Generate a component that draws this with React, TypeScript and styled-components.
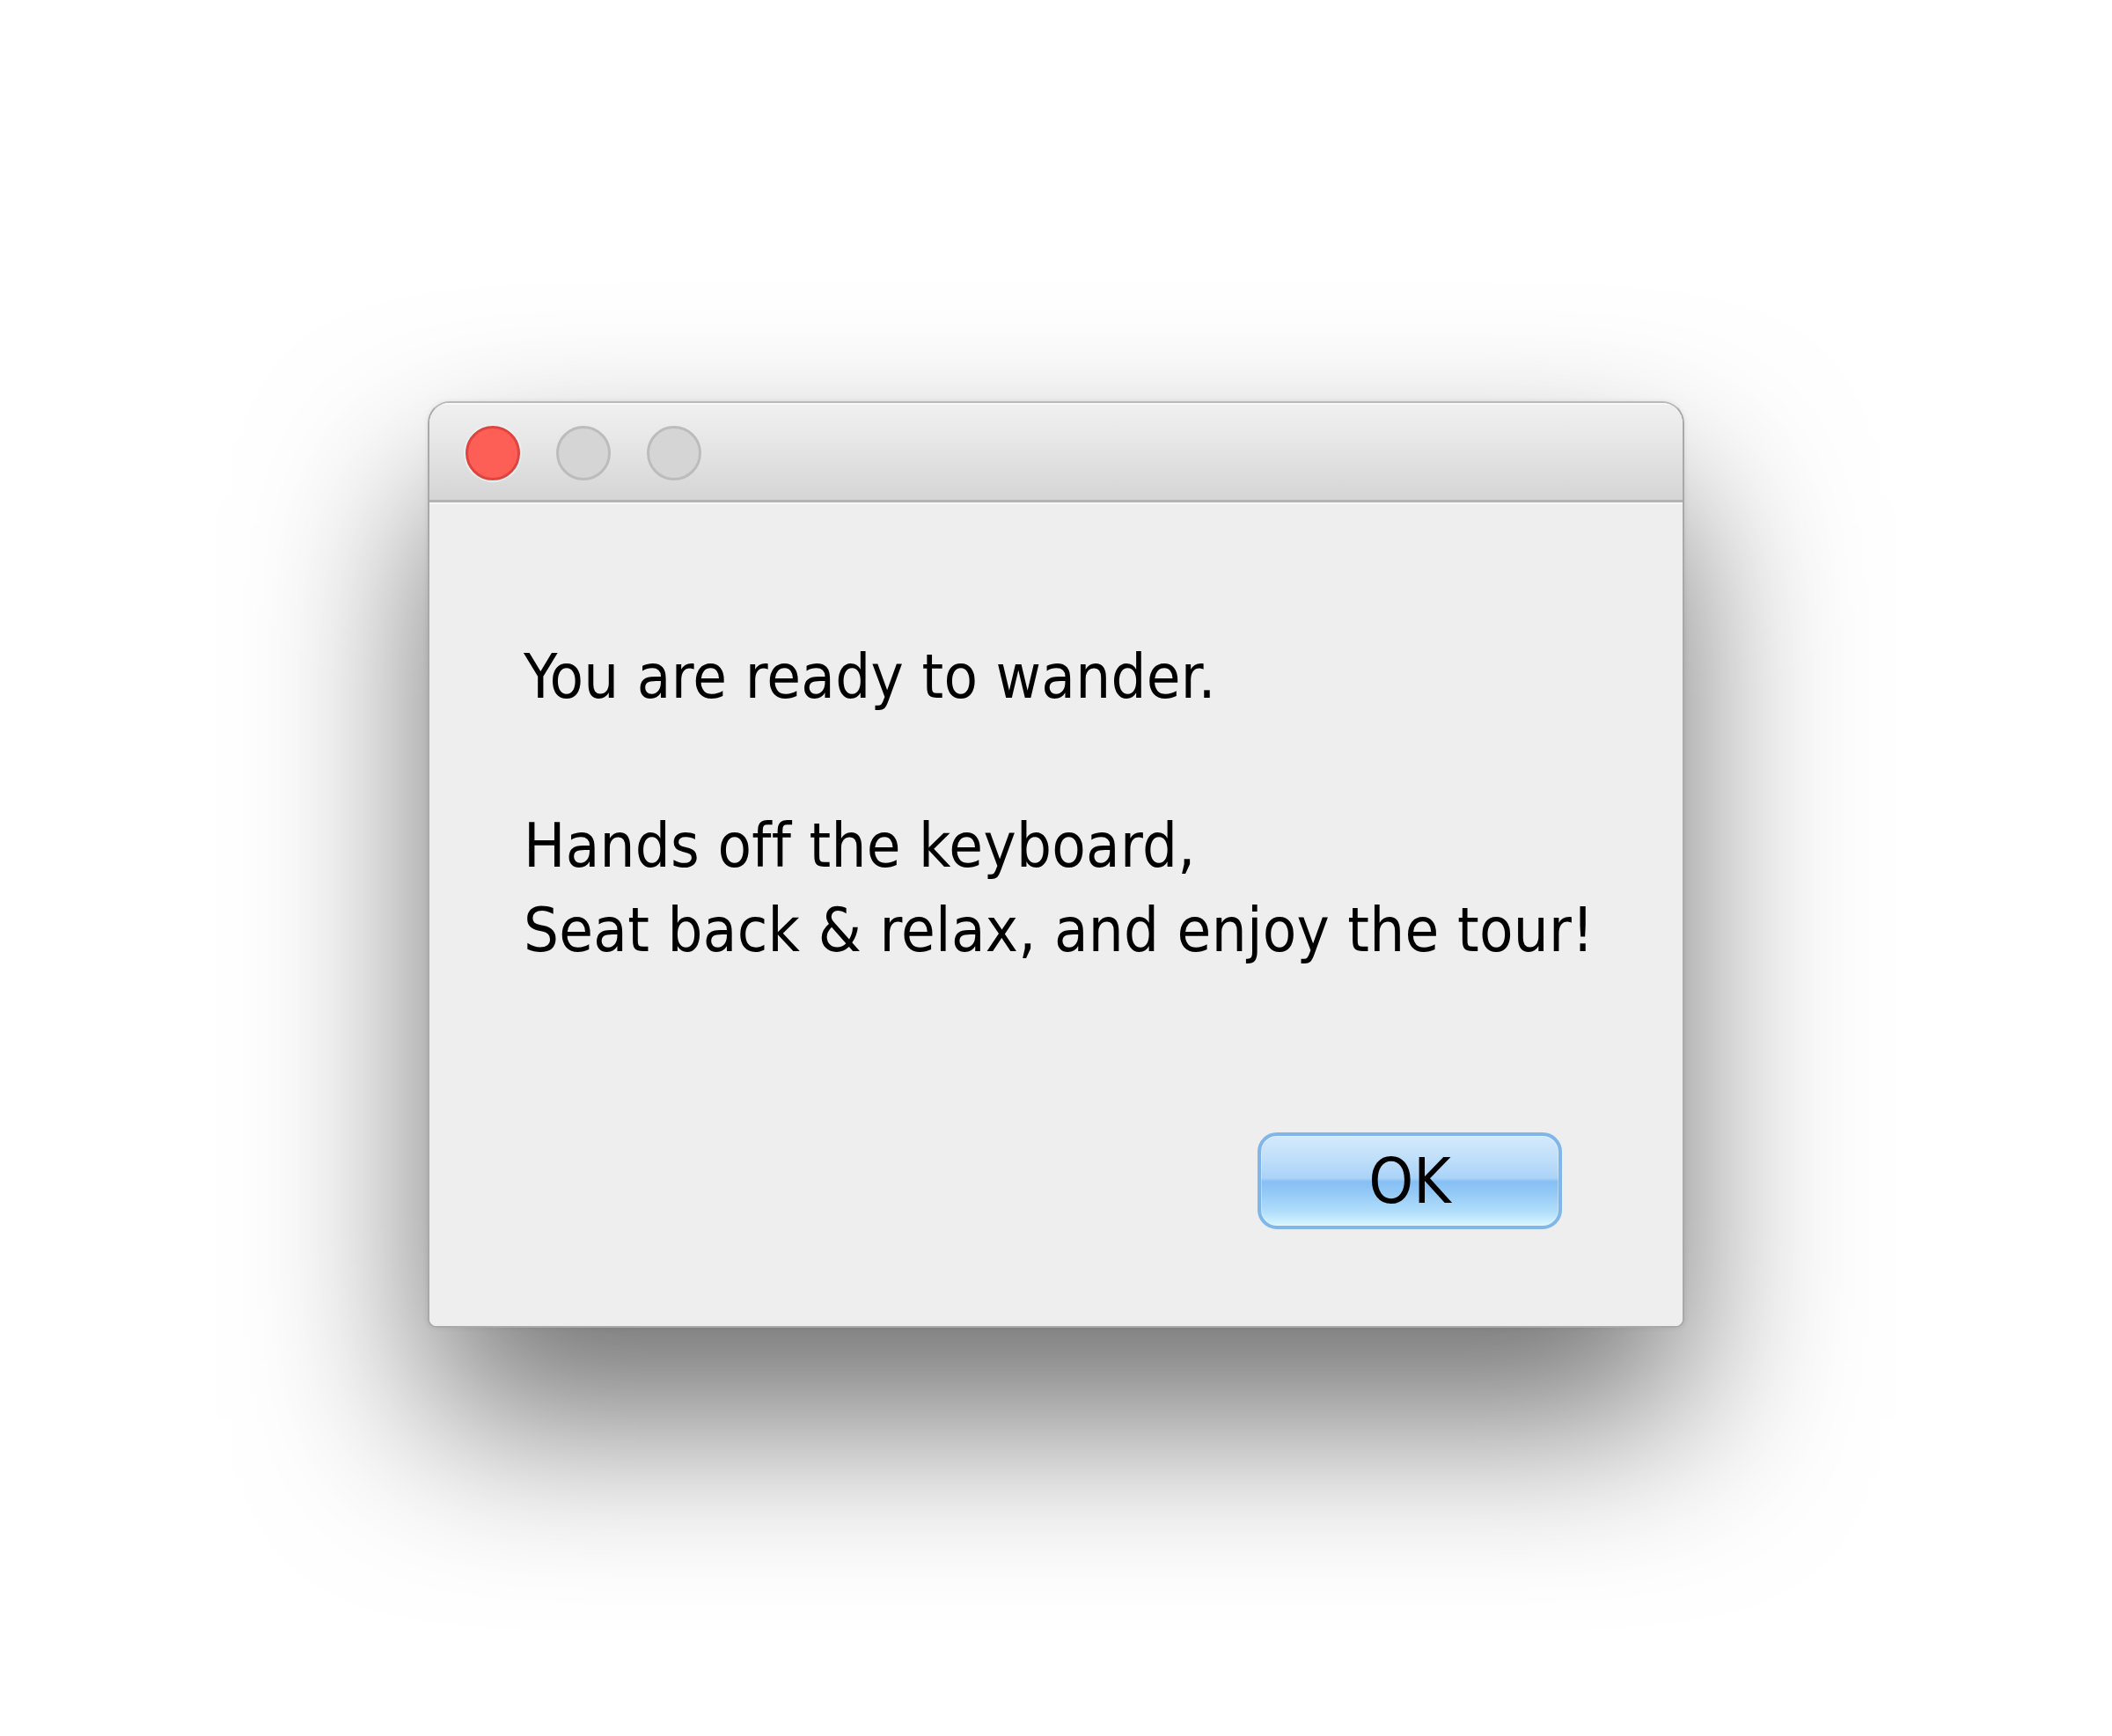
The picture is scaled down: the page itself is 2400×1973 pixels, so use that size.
import React from "react";
import styled, { createGlobalStyle } from "styled-components";

const GlobalStyle = createGlobalStyle`
  html, body {
    margin: 0;
    padding: 0;
    background: #ffffff;
  }
  #root {
    min-height: 1973px;
  }
`;

const Page = styled.div`
  width: 2400px;
  height: 1973px;
  box-sizing: border-box;
  padding-top: 456px;
  display: flex;
  justify-content: center;
  align-items: flex-start;
  background: #ffffff;
  overflow: hidden;
`;

const Window = styled.div`
  width: 1428px;
  height: 1053px;
  box-sizing: border-box;
  display: flex;
  flex-direction: column;
  border: 2px solid #a9a9a9;
  border-top-color: #b9b9b9;
  border-radius: 25px 25px 10px 10px;
  overflow: hidden;
  background: #eeeeee;
  box-shadow: 0 105px 200px rgba(0, 0, 0, 0.56), 0 0 6px rgba(0, 0, 0, 0.08);
`;

const TitleBar = styled.div`
  height: 113px;
  flex: none;
  box-sizing: border-box;
  display: flex;
  align-items: center;
  gap: 41px;
  padding-left: 41px;
  padding-top: 4px;
  background: linear-gradient(to bottom, #f0f0f0 0%, #e8e8e8 35%, #d5d5d5 100%);
  border-bottom: 3px solid #b3b3b3;
  box-shadow: inset 0 2px 0 #f8f8f8;
`;

const Light = styled.span<{ $active?: boolean }>`
  width: 62px;
  height: 62px;
  box-sizing: border-box;
  border-radius: 50%;
  background: ${(p) => (p.$active ? "#fd5f57" : "#d5d5d5")};
  border: 3px solid ${(p) => (p.$active ? "#e0443e" : "#bcbcbc")};
  box-shadow: ${(p) => (p.$active ? "0 0 0 2px rgba(230, 245, 245, 0.8)" : "none")};
`;

const Content = styled.div`
  flex: 1;
  display: flex;
  flex-direction: column;
  padding: 150px 0 0 107px;
  background: #eeeeee;
  box-shadow: inset 0 2px 0 #f7f7f7;
`;

const Message = styled.div`
  font-family: "DejaVu Sans Condensed", "DejaVu Sans", sans-serif;
  font-stretch: condensed;
  font-size: 70px;
  line-height: 96px;
  letter-spacing: 0.3px;
  color: #000000;
`;

const Line = styled.div`
  white-space: pre;
  min-height: 96px;
`;

const ButtonRow = styled.div`
  margin-top: auto;
  display: flex;
  justify-content: flex-end;
  padding: 0 137px 110px 0;
`;

const OkButton = styled.button`
  width: 346px;
  height: 110px;
  box-sizing: border-box;
  display: flex;
  align-items: center;
  justify-content: center;
  padding: 0;
  border: 4px solid #80b6ea;
  border-radius: 22px;
  background: linear-gradient(
    to bottom,
    #d4e9fc 0%,
    #c0dffa 25%,
    #aad3f8 47%,
    #86bff4 51%,
    #92c8f6 62%,
    #b2defb 85%,
    #d9f7ff 100%
  );
  box-shadow: inset 0 0 0 1px rgba(255, 255, 255, 0.35);
  font-family: "DejaVu Sans Condensed", "DejaVu Sans", sans-serif;
  font-stretch: condensed;
  font-size: 72px;
  line-height: 1;
  color: #000000;
  cursor: default;
`;

export default function App() {
  return (
    <>
      <GlobalStyle />
      <Page>
        <Window>
          <TitleBar>
            <Light $active />
            <Light />
            <Light />
          </TitleBar>
          <Content>
            <Message>
              <Line>You are ready to wander.</Line>
              <Line> </Line>
              <Line>Hands off the keyboard,</Line>
              <Line>Seat back &amp; relax, and enjoy the tour!</Line>
            </Message>
            <ButtonRow>
              <OkButton>OK</OkButton>
            </ButtonRow>
          </Content>
        </Window>
      </Page>
    </>
  );
}
